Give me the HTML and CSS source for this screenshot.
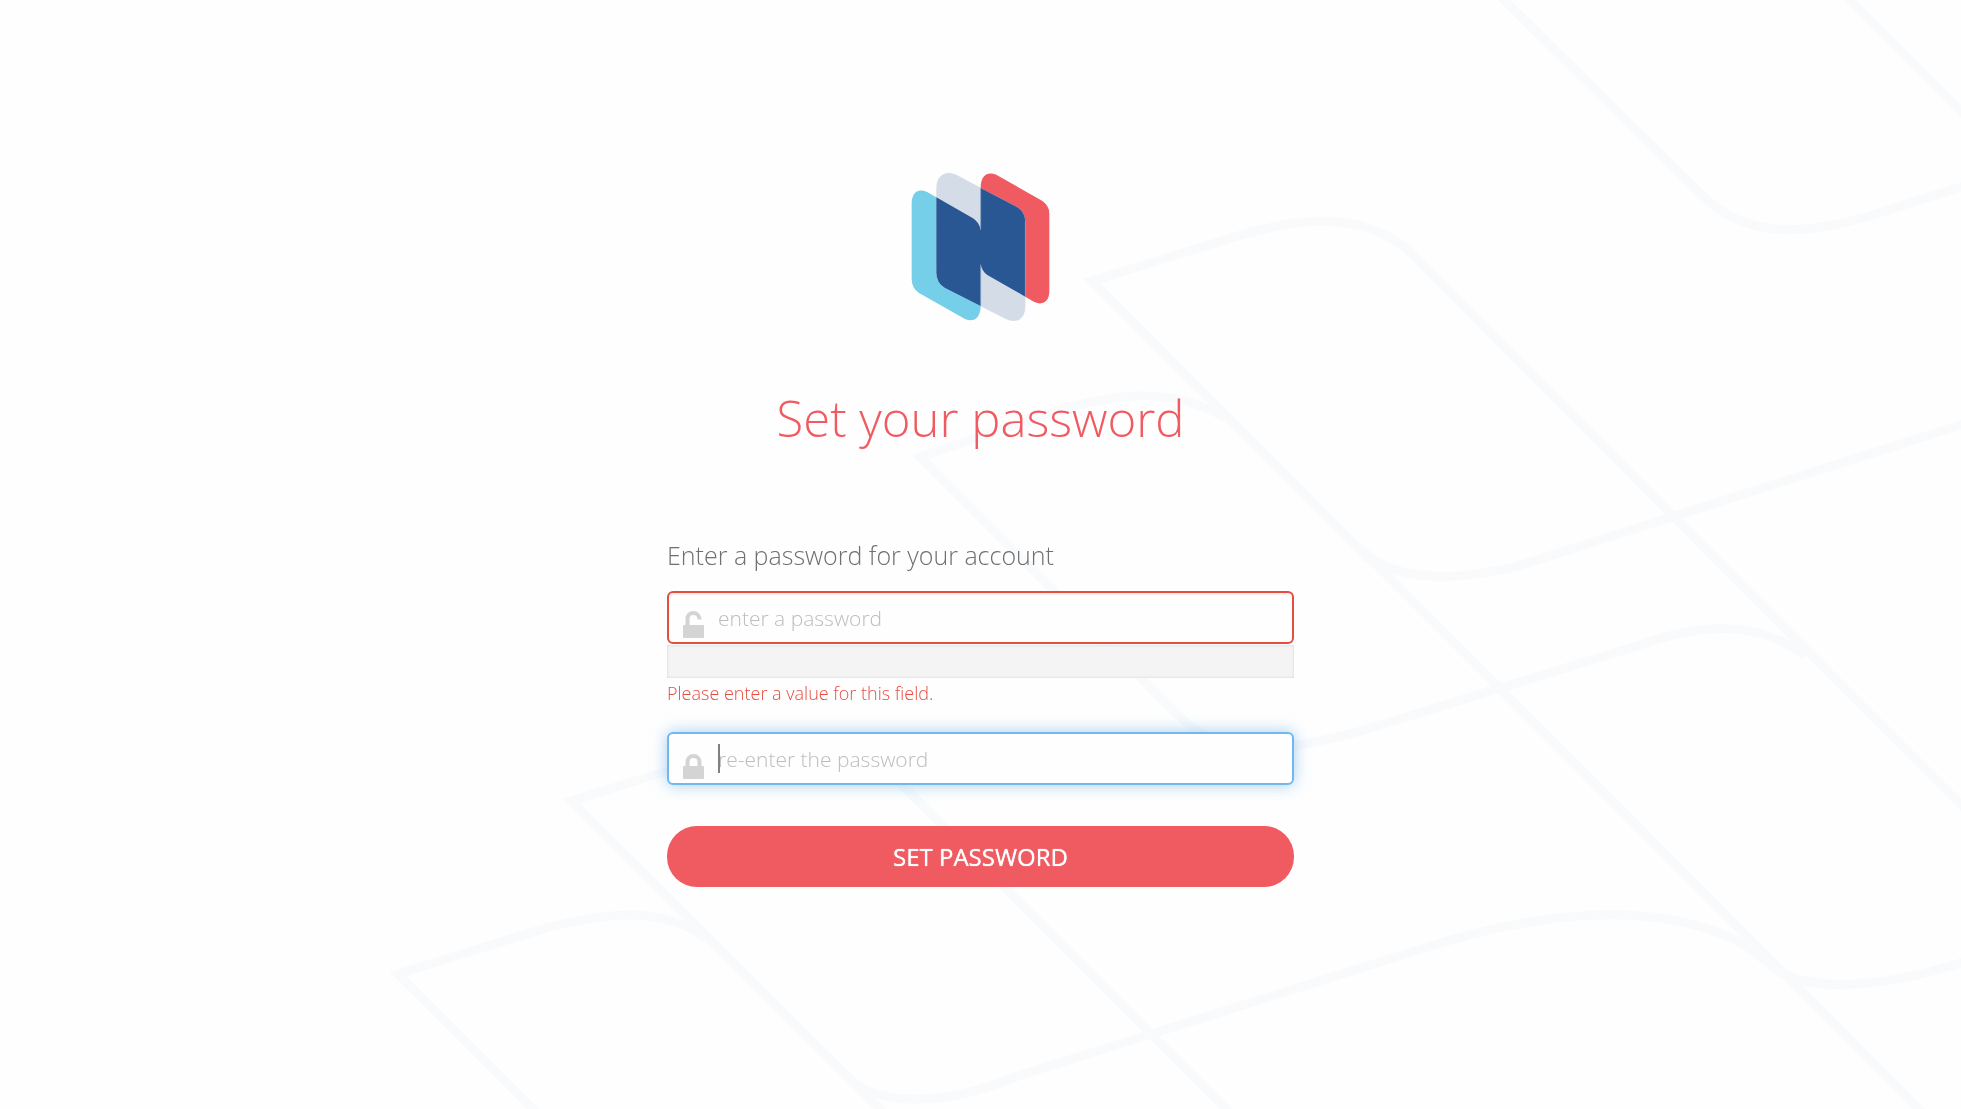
FILE: index.html
```html
<!DOCTYPE html>
<html lang="en">
<head>
<meta charset="utf-8">
<meta name="viewport" content="width=device-width, initial-scale=1">
<title>Set your password</title>
<link rel="stylesheet" href="styles.css">
</head>
<body>
<svg class="backdrop" viewBox="0 0 1961 1109" preserveAspectRatio="xMaxYMin slice" aria-hidden="true">
  <path d="M1498-6 1701 194C1748 242 1810 234 1876 214L1970 184"/>
  <path d="M1844-6 1970 120"/>
  <path d="M1370 560 1092 281 1215 243C1290 218 1357 208 1408 250L1970 814"/>
  <path d="M1925 1115 1362 550C1395 583 1458 581 1518 566L1970 422"/>
  <path d="M1225 418C1175 387 1120 392 1053 412L920 457 1175 712C1222 763 1292 750 1364 730L1640 645C1700 624 1755 619 1805 655"/>
  <path d="M886 1115 571 801 706 759C760 741 830 727 880 763L1232 1115"/>
  <path d="M706 938C660 905 600 912 533 932L398 974 539 1115"/>
  <path d="M849 1078C882 1109 950 1104 1018 1076L1415 951C1530 913 1655 896 1745 945L1783 974C1820 990 1880 989 1970 960"/>
</svg>
<main class="page">
  <svg class="logo" viewBox="62 36 420 450" role="img" aria-label="Logo">
    <path fill="#d4dde7" d="M138 86C138 44 166 30 198 44L380 141Q405 156 405 186V438C405 478 378 492 346 477L164 384Q138 368 138 338Z"/>
    <path fill="#76cfe8" d="M64 132C64 95 86 84 112 97L138 112V338Q138 368 164 384L271 438C271 474 250 489 224 477L86 399Q64 385 64 356Z"/>
    <path fill="#f05a61" d="M271 84C271 44 294 33 319 45L455 122Q477 136 477 161V394C477 428 454 438 428 424L405 410V186Q405 156 380 141Z"/>
    <path fill="#285794" d="M138 112 248 175Q267 187 271 210V84L380 141Q405 156 405 186V410L291 345Q274 333 271 312V438L164 384Q138 368 138 338Z"/>
    <path stroke="#8aa2c2" stroke-width="2" d="M271 86V208M271 314V437M405 186V408"/>
  </svg>
  <h1 class="title">Set your password</h1>
  <form class="form">
    <label class="label" for="password">Enter a password for your account</label>
    <div class="field">
      <svg class="lock" viewBox="0 0 21 27" aria-hidden="true"><path d="M4.500 15V7.500A5.500 5.500 0 0 1 10 2C13.500 2 16.500 4.500 16.500 8.500" fill="none" stroke="#d4d4d4" stroke-width="4"/><rect y="14" width="21" height="13" rx="1" fill="#d4d4d4"/></svg>
      <input class="input input-error" id="password" type="password" placeholder="enter a password">
    </div>
    <div class="strength"></div>
    <p class="error">Please enter a value for this field.</p>
    <div class="field">
      <svg class="lock" viewBox="0 0 21 27" aria-hidden="true"><path d="M4.500 16V10A6 6 0 0 1 16.500 10V16" fill="none" stroke="#d4d4d4" stroke-width="4"/><rect y="14" width="21" height="13" rx="1" fill="#d4d4d4"/></svg>
      <input class="input input-focus" type="password" placeholder="re-enter the password" aria-label="Re-enter the password">
      <span class="caret"></span>
    </div>
    <button class="submit" type="submit">SET PASSWORD</button>
  </form>
</main>
</body>
</html>
```
FILE: styles.css
```css
* { box-sizing: border-box; }
body {
  margin: 0;
  min-height: 100vh;
  background: #fefefe;
  font-family: "Open Sans", sans-serif;
  font-weight: 300;
}
.backdrop {
  position: fixed;
  inset: 0;
  z-index: -1;
  width: 100%;
  height: 100%;
  fill: none;
  stroke: #f8fafc;
  stroke-width: 9;
}
.page {
  display: flex;
  flex-direction: column;
  align-items: center;
  padding: 172px 16px 32px;
}
.logo { width: 140px; height: 150px; }
.title {
  margin: 60px 0 0;
  font-size: 49px;
  line-height: 72px;
  font-weight: 300;
  color: #f05a61;
}
.form {
  display: flex;
  flex-direction: column;
  width: 100%;
  max-width: 627px;
  margin-top: 83px;
}
.label {
  margin-bottom: 18px;
  font-size: 25px;
  line-height: 36px;
  color: #6f6f6f;
}
.field { position: relative; }
.lock {
  position: absolute;
  left: 16px;
  bottom: 6px;
  width: 21px;
  height: 27px;
}
.input {
  display: block;
  width: 100%;
  height: 53px;
  padding: 0 16px 0 49px;
  border: 2px solid #ccc;
  border-radius: 6px;
  outline: 0;
  background: #fefefe;
  font: inherit;
  font-size: 21px;
  color: #555;
}
.input::placeholder { color: #bdbdbd; opacity: 1; }
.input-error { border-color: #e74c41; box-shadow: inset 0 2px 2px rgba(0, 0, 0, .06); }
.input-focus { border-color: #74b7ec; box-shadow: 0 0 16px rgba(102, 175, 233, .6); }
.caret {
  position: absolute;
  left: 51px;
  top: 12px;
  width: 2px;
  height: 29px;
  background: #808080;
}
.strength {
  height: 33px;
  margin-top: 1px;
  background: #f4f4f4;
  box-shadow: inset 0 0 3px rgba(0, 0, 0, .14);
}
.error {
  margin: 3px 0 27px;
  font-size: 18px;
  line-height: 24px;
  color: #e74c41;
}
.submit {
  height: 61px;
  margin-top: 41px;
  border: 0;
  border-radius: 30px;
  background: #f05a61;
  color: #fff;
  font: inherit;
  font-size: 24px;
  font-weight: 500;
  text-shadow: 0 0 1px #fff;
  cursor: pointer;
}
```
